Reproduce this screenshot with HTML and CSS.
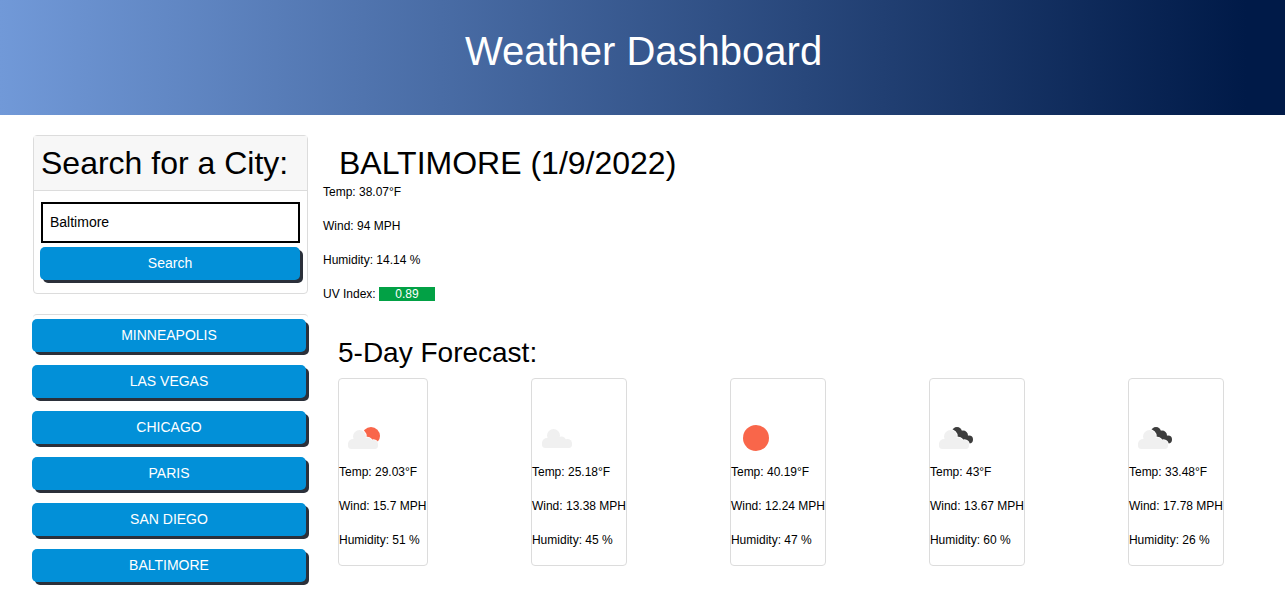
FILE: index.html
```html
<!DOCTYPE html>
<html lang="en">
<head>
  <meta charset="UTF-8" />
  <meta name="viewport" content="width=device-width, initial-scale=1.0" />
  <title>Weather Dashboard</title>
  <link rel="stylesheet" href="styles.css">
</head>
<body>
  <header class="page-header">Weather Dashboard</header>

  <svg class="icon-defs" width="0" height="0" aria-hidden="true">
    <defs>
      <g id="cloud-shape">
        <circle cx="14" cy="31" r="5" />
        <circle cx="20.5" cy="23.5" r="6.5" />
        <path d="M14 26h13v6h-13z" />
        <circle cx="28.5" cy="29" r="4.5" />
        <circle cx="34.5" cy="31.5" r="4.5" />
        <rect x="9" y="29" width="30" height="7" rx="3.5" />
      </g>
    </defs>
  </svg>

  <div class="layout">
    <aside class="sidebar">
      <div class="search-card">
        <h2 class="search-title">Search for a City:</h2>
        <div class="search-body">
          <input class="search-input" type="text" value="Baltimore" />
          <button class="btn btn-search">Search</button>
        </div>
      </div>

      <div class="history">
        <button class="btn btn-city">MINNEAPOLIS</button>
        <button class="btn btn-city">LAS VEGAS</button>
        <button class="btn btn-city">CHICAGO</button>
        <button class="btn btn-city">PARIS</button>
        <button class="btn btn-city">SAN DIEGO</button>
        <button class="btn btn-city">BALTIMORE</button>
      </div>
    </aside>

    <main class="main">
      <h2 class="city-title">BALTIMORE (1/9/2022)</h2>
      <p>Temp: 38.07°F</p>
      <p>Wind: 94 MPH</p>
      <p>Humidity: 14.14 %</p>
      <p>UV Index: <span class="uv-badge">0.89</span></p>

      <h3 class="forecast-title">5-Day Forecast:</h3>
      <div class="forecast">
        <div class="day-card day-card-first">
          <svg class="weather-icon" viewBox="0 0 50 50">
            <circle cx="32" cy="23" r="9" fill="#f9664a" />
            <use href="#cloud-shape" fill="#fff" stroke="#fff" stroke-width="1.5" />
            <use href="#cloud-shape" fill="#f0f0f0" />
          </svg>
          <p>Temp: 29.03°F</p>
          <p>Wind: 15.7 MPH</p>
          <p>Humidity: 51 %</p>
        </div>
        <div class="day-card">
          <svg class="weather-icon" viewBox="0 0 50 50">
            <use href="#cloud-shape" y="-1" x="1" fill="#f0f0f0" />
          </svg>
          <p>Temp: 25.18°F</p>
          <p>Wind: 13.38 MPH</p>
          <p>Humidity: 45 %</p>
        </div>
        <div class="day-card">
          <svg class="weather-icon" viewBox="0 0 50 50">
            <circle cx="25" cy="25" r="13" fill="#f9664a" />
          </svg>
          <p>Temp: 40.19°F</p>
          <p>Wind: 12.24 MPH</p>
          <p>Humidity: 47 %</p>
        </div>
        <div class="day-card">
          <svg class="weather-icon" viewBox="0 0 50 50">
            <g fill="#3d3d3d">
              <circle cx="27" cy="19" r="5" />
              <circle cx="33" cy="22.5" r="5" />
              <circle cx="39" cy="26.5" r="4" />
            </g>
            <use href="#cloud-shape" fill="#fff" stroke="#fff" stroke-width="1.5" />
            <use href="#cloud-shape" fill="#f0f0f0" />
          </svg>
          <p>Temp: 43°F</p>
          <p>Wind: 13.67 MPH</p>
          <p>Humidity: 60 %</p>
        </div>
        <div class="day-card">
          <svg class="weather-icon" viewBox="0 0 50 50">
            <g fill="#3d3d3d">
              <circle cx="27" cy="19" r="5" />
              <circle cx="33" cy="22.5" r="5" />
              <circle cx="39" cy="26.5" r="4" />
            </g>
            <use href="#cloud-shape" fill="#fff" stroke="#fff" stroke-width="1.5" />
            <use href="#cloud-shape" fill="#f0f0f0" />
          </svg>
          <p>Temp: 33.48°F</p>
          <p>Wind: 17.78 MPH</p>
          <p>Humidity: 26 %</p>
        </div>
      </div>
    </main>
  </div>
</body>
</html>
```

FILE: styles.css
```css
* {
  box-sizing: border-box;
}
html, body {
  overflow: hidden;
}
body {
  font-family: "Liberation Sans", Arial, sans-serif;
  font-size: 12px;
  line-height: 18px;
  margin: 0;
  background-color: #fff;
  color: #000;
}
p {
  margin: 0 0 16px;
}
.icon-defs {
  position: absolute;
}
.page-header {
  height: 115px;
  display: flex;
  align-items: center;
  justify-content: center;
  padding: 0 0 14px 2px;
  background: linear-gradient(90deg, #7199d8 0%, #001a48 97%);
  color: #fff;
  font-size: 40px;
}
.layout {
  display: flex;
  padding: 20px 61px 0 32px;
}
.sidebar {
  width: 276px;
  flex-shrink: 0;
}
.search-card {
  margin-left: 1px;
  border: 1px solid #dcdcdc;
  border-radius: 4px;
}
.search-title {
  margin: 0;
  padding: 8px 7px;
  background: #f7f7f7;
  border-bottom: 1px solid #dcdcdc;
  font-size: 32px;
  font-weight: 400;
  line-height: 38px;
}
.search-body {
  padding: 11px 6px 13px;
}
.search-input {
  display: block;
  width: 259px;
  height: 41px;
  margin-left: 1px;
  padding: 0 7px 2px;
  border: 2px solid #000;
  font-family: inherit;
  font-size: 14px;
  color: #000;
}
.btn {
  display: block;
  height: 33px;
  padding: 0 0 2px;
  border: 0;
  border-radius: 5px;
  background: #0290d8;
  box-shadow: 3px 3px 0 #2b303a;
  color: #fff;
  font-family: inherit;
  font-size: 14px;
}
.btn-search {
  width: 260px;
  margin-top: 4px;
}
.history {
  margin: 20px 0 0 1px;
  padding-top: 4px;
  border-top: 1px solid #dcdcdc;
  border-radius: 4px 4px 0 0;
}
.btn-city {
  width: 274px;
  margin: 0 0 13px -1px;
}
.main {
  flex: 1;
  margin-left: 15px;
}
.city-title {
  margin: 9px 0 0;
  padding-left: 16px;
  font-size: 32px;
  font-weight: 400;
  line-height: 39px;
}
.uv-badge {
  display: inline-block;
  width: 56px;
  height: 14px;
  background: #02a145;
  color: #fff;
  line-height: 14px;
  text-align: center;
}
.forecast-title {
  margin: 33px 0 8px;
  padding-left: 15px;
  font-size: 28px;
  font-weight: 400;
  line-height: 34px;
}
.forecast {
  display: flex;
  justify-content: space-between;
  margin-left: 15px;
}
.day-card {
  padding-top: 34px;
  border: 1px solid #dcdcdc;
  border-radius: 4px;
  white-space: nowrap;
}
.day-card-first {
  min-width: 90px;
}
.weather-icon {
  display: block;
  width: 50px;
  height: 50px;
}
```
